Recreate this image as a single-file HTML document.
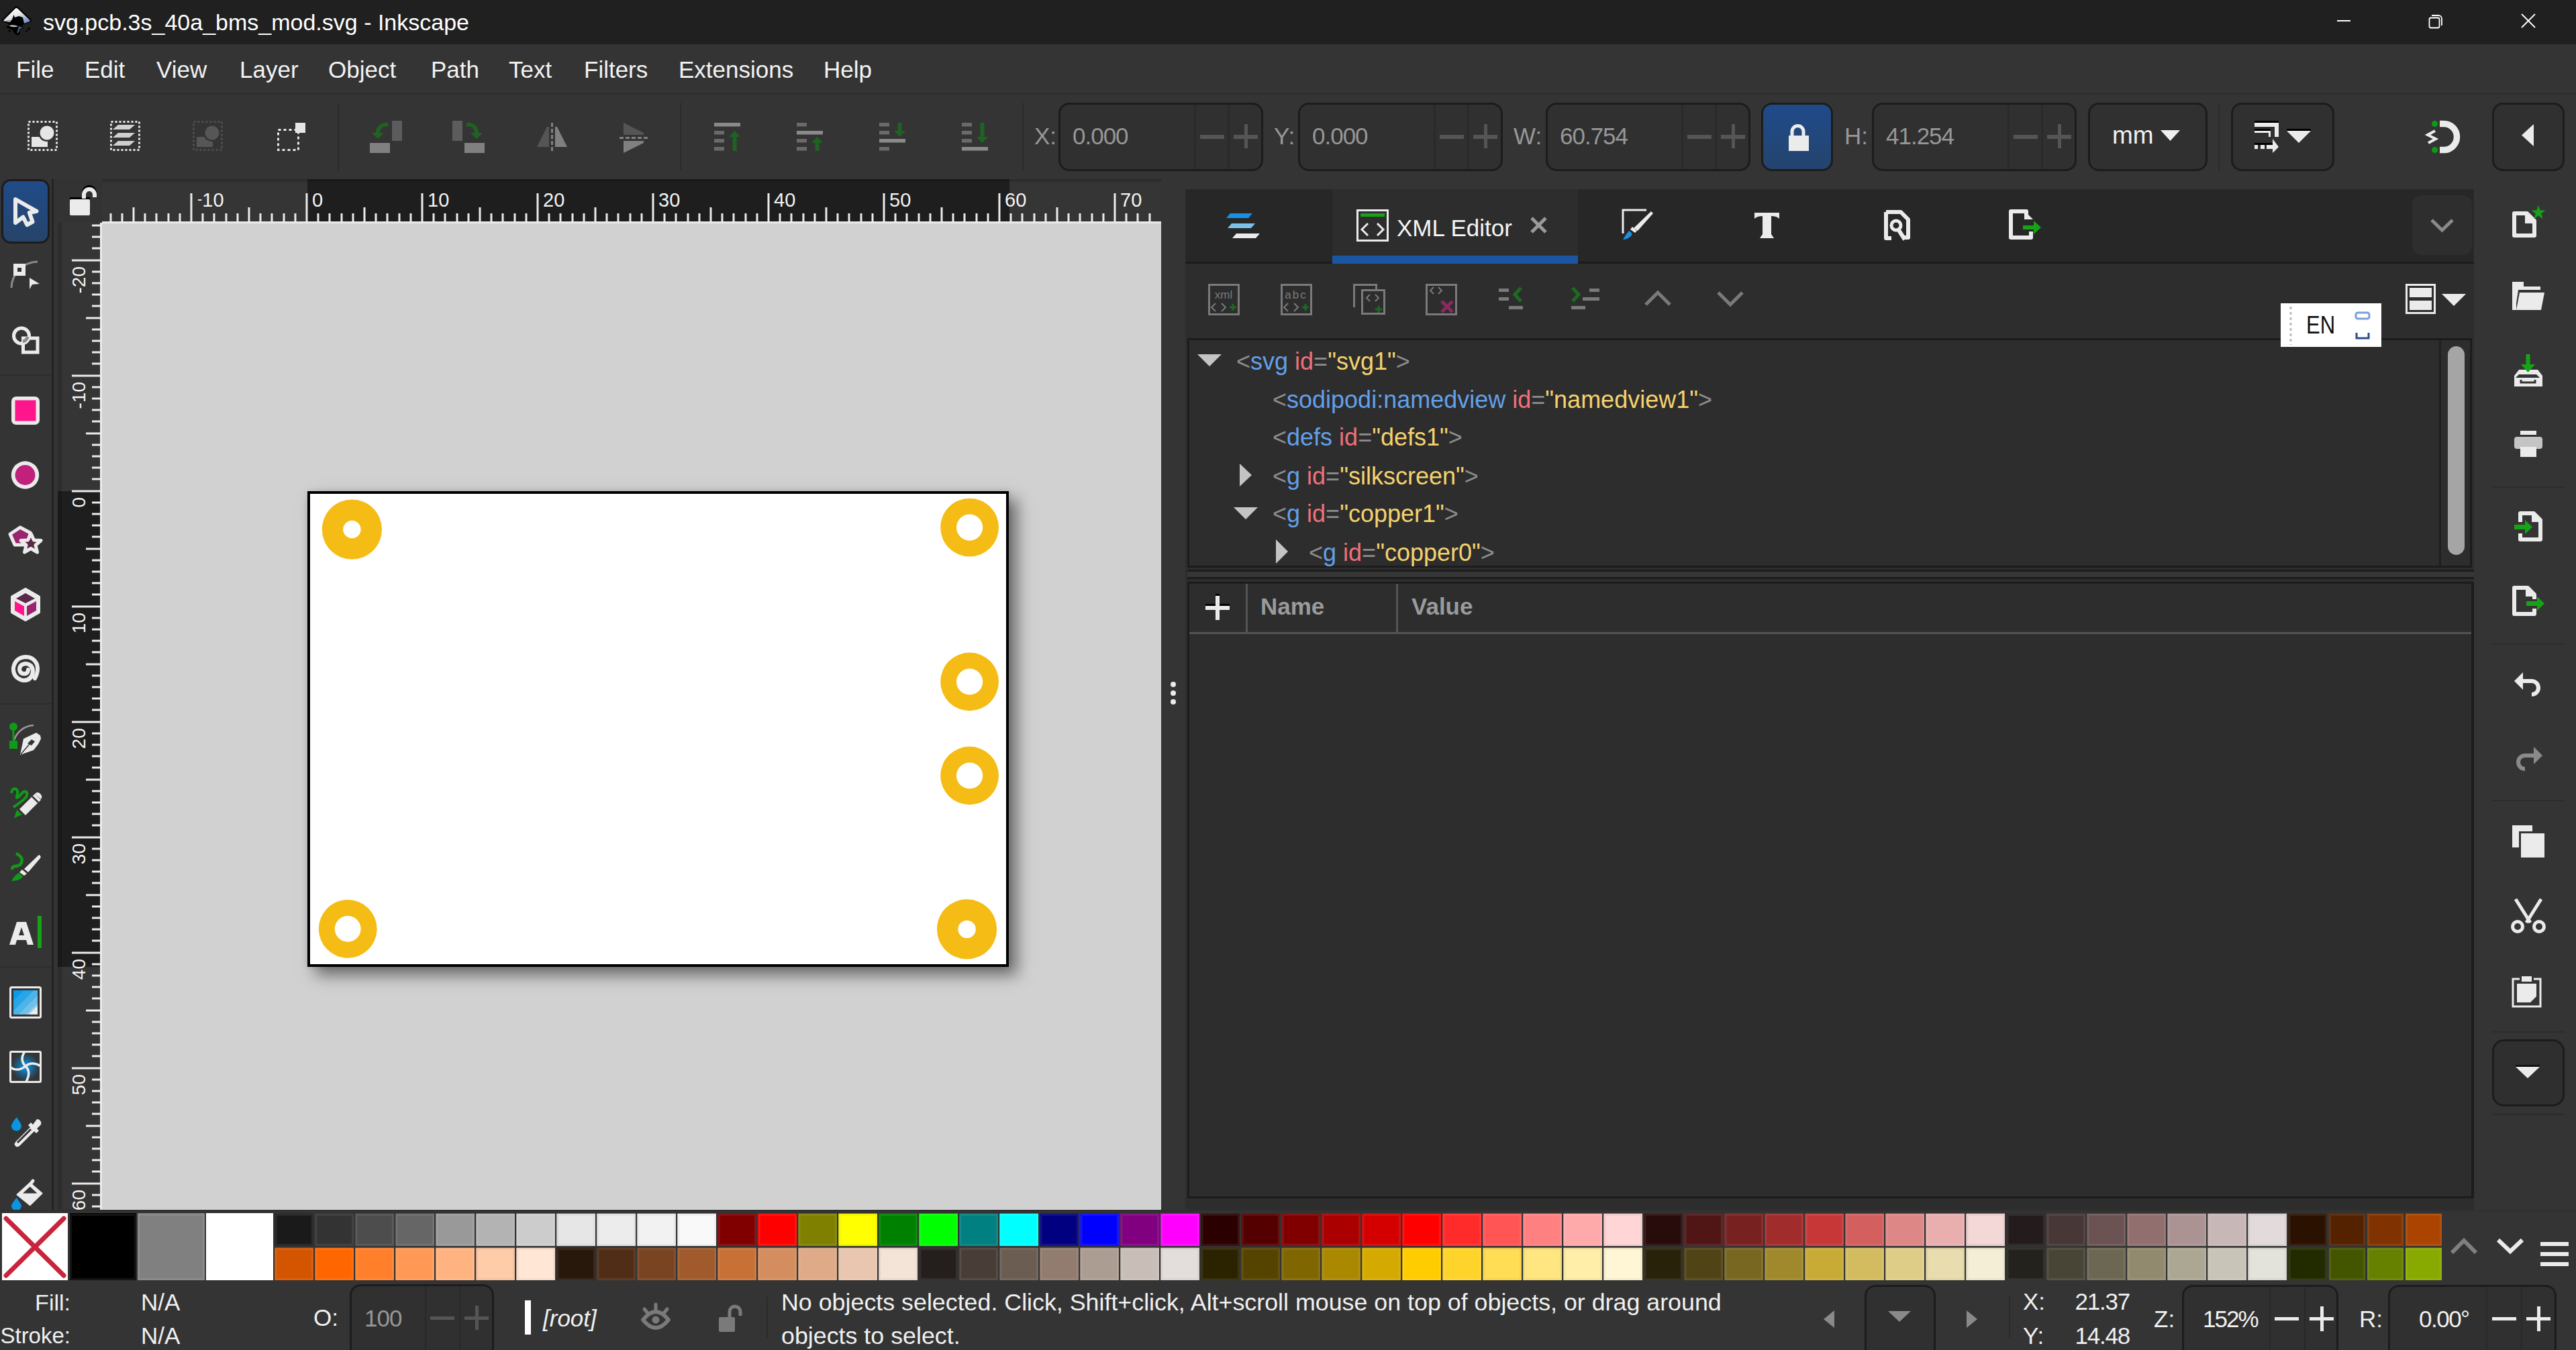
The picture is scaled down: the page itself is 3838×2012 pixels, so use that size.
<!DOCTYPE html>
<html><head><meta charset="utf-8">
<style>
*{box-sizing:border-box;margin:0;padding:0}
html,body{width:3838px;height:2012px;overflow:hidden;background:#343434;font-family:"Liberation Sans",sans-serif;color:#e8e8e8}
.a{position:absolute}
.t{position:absolute;white-space:pre;line-height:1}
svg{position:absolute;overflow:visible}
</style></head><body>
<!-- TITLE BAR -->
<div class="a" style="left:0;top:0;width:3838px;height:66px;background:#202020"></div>

<svg style="left:0;top:0" width="70" height="65" viewBox="0 0 70 65">
 <defs><linearGradient id="lg1" x1="0.3" y1="0" x2="0.9" y2="0.9"><stop offset="0" stop-color="#fff"/><stop offset="0.45" stop-color="#e8e8ec"/><stop offset="1" stop-color="#6d8fbf"/></linearGradient>
 <linearGradient id="lg2" x1="0" y1="0" x2="0" y2="1"><stop offset="0" stop-color="#ddd"/><stop offset="1" stop-color="#777"/></linearGradient></defs>
 <path d="M22 10.5 Q24.5 8.5 27 10.5 L46 28.5 Q48 31 45.5 32.5 L33 37.5 L35 42 L29 45 L30 50 L26 53 L22 50 L18 44 L9 41 L14 36 L5 32.5 Q2 31 4 28.5 Z" fill="#000"/>
 <path d="M23 12.5 Q24.5 11.5 26 12.5 L44.5 30 Q45 31.5 44 32 L36 35 L34 26 L28 24 L22 26 L20.5 22 L18 29 L14.5 33 L6 31.5 Q5 31 5.5 30 Z" fill="url(#lg1)"/>
 <path d="M6 31 L15 33 L17 30 Z" fill="#999"/>
 <path d="M13 38.5 Q19 36 27 39 Q24 41 18 40 Z" fill="#bbb"/>
 <path d="M28 39 L34 41 L29 44 L28 48 L25 50 Z" fill="#3c5a7a"/>
 <circle cx="14" cy="46" r="1.6" fill="#000"/><circle cx="39.5" cy="46.5" r="1.4" fill="#000"/><circle cx="43" cy="43" r="1.8" fill="#000"/>
</svg>
<div class="t" style="left:64px;top:16px;font-size:34px;color:#fff">svg.pcb.3s_40a_bms_mod.svg - Inkscape</div>
<div class="a" style="left:3482px;top:30px;width:20px;height:2px;background:#fff"></div>
<svg style="left:3610px;top:15px" width="40" height="35" viewBox="0 0 40 35">
 <rect x="9.5" y="11.5" width="15" height="15" rx="2.5" fill="none" stroke="#fff" stroke-width="1.8"/>
 <path d="M13 8 h10 a5 5 0 0 1 5 5 v10" fill="none" stroke="#fff" stroke-width="1.8"/>
</svg>
<svg style="left:3750px;top:15px" width="35" height="35" viewBox="0 0 35 35">
 <path d="M7 6 L27 26 M27 6 L7 26" stroke="#fff" stroke-width="1.8"/>
</svg>

<!-- MENU BAR -->
<div class="a" id="menubar" style="left:0;top:66px;width:3838px;height:75px;background:#343434;border-bottom:2px solid #2c2c2c"></div>
<!-- MENUITEMS -->
<div class="t" style="left:24px;top:86px;font-size:35px;color:#f2f2f2">File</div><div class="t" style="left:126px;top:86px;font-size:35px;color:#f2f2f2">Edit</div><div class="t" style="left:233px;top:86px;font-size:35px;color:#f2f2f2">View</div><div class="t" style="left:357px;top:86px;font-size:35px;color:#f2f2f2">Layer</div><div class="t" style="left:489px;top:86px;font-size:35px;color:#f2f2f2">Object</div><div class="t" style="left:642px;top:86px;font-size:35px;color:#f2f2f2">Path</div><div class="t" style="left:758px;top:86px;font-size:35px;color:#f2f2f2">Text</div><div class="t" style="left:870px;top:86px;font-size:35px;color:#f2f2f2">Filters</div><div class="t" style="left:1011px;top:86px;font-size:35px;color:#f2f2f2">Extensions</div><div class="t" style="left:1227px;top:86px;font-size:35px;color:#f2f2f2">Help</div>
<!-- TOOLBAR -->
<div class="a" style="left:0;top:141px;width:3838px;height:126px;background:#343434"></div>
<svg style="left:0;top:0" width="3838" height="270"><rect x="42.5" y="181.5" width="42" height="42" fill="none" stroke="#e6e6e6" stroke-width="3" stroke-dasharray="3 3"/><rect x="47" y="204" width="24" height="15" fill="#e6e6e6"/><circle cx="70" cy="198" r="13" fill="#343434"/><circle cx="70" cy="198" r="10.5" fill="#e6e6e6"/><rect x="165.5" y="181.5" width="42" height="42" fill="none" stroke="#e6e6e6" stroke-width="3" stroke-dasharray="3 3"/><path d="M176 186 H201 L193 193 H168 Z M176 198 H201 L193 205 H168 Z M176 210 H201 L193 217 H168 Z" fill="#cfcfcf"/><rect x="288.5" y="181.5" width="42" height="42" fill="none" stroke="#4e4e4e" stroke-width="3" stroke-dasharray="3 3"/><rect x="293" y="204" width="24" height="15" fill="#565656"/><circle cx="316" cy="198" r="13" fill="#343434"/><circle cx="316" cy="198" r="10.5" fill="#565656"/><rect x="414.5" y="193.5" width="30" height="30" fill="none" stroke="#e6e6e6" stroke-width="3" stroke-dasharray="4 4"/><rect x="440" y="183" width="15" height="15" fill="#e6e6e6"/><rect x="584" y="180" width="15" height="30" fill="#5c5c5c"/><rect x="551" y="213" width="30" height="15" fill="#808080"/><path d="M578 183 A15 15 0 0 0 560 198 L554 198 L563 207 L572 198 L566 198 A9 9 0 0 1 578 189 Z" fill="#1f6322"/><rect x="674" y="180" width="15" height="30" fill="#5c5c5c"/><rect x="692" y="213" width="30" height="15" fill="#808080"/><path d="M695 183 A15 15 0 0 1 713 198 L719 198 L710 207 L701 198 L707 198 A9 9 0 0 0 695 189 Z" fill="#1f6322"/><path d="M800 219 L815 189 H818 V219 Z" fill="#555"/><path d="M827 189 H830 L845 219 H827 Z" fill="#808080"/><path d="M822.5 183 V225" stroke="#808080" stroke-width="3" stroke-dasharray="6 3"/><path d="M929 183 L959 198 V201 H929 Z" fill="#555"/><path d="M929 210 H959 V213 L929 228 Z" fill="#808080"/><path d="M923 205.5 H965" stroke="#808080" stroke-width="3" stroke-dasharray="6 3"/><rect x="1064" y="183" width="39" height="5.5" fill="#8a8a8a"/><rect x="1064" y="195" width="15" height="5.5" fill="#6a6a6a"/><rect x="1064" y="207" width="15" height="5.5" fill="#6a6a6a"/><rect x="1064" y="219" width="15" height="5.5" fill="#6a6a6a"/><path d="M1094.5 195 L1103.0 204 H1097.5 V225 H1091.5 V204 H1086.0 Z" fill="#1f6322"/><rect x="1187" y="183" width="15" height="5.5" fill="#6a6a6a"/><rect x="1187" y="195" width="39" height="5.5" fill="#8a8a8a"/><rect x="1187" y="207" width="15" height="5.5" fill="#6a6a6a"/><rect x="1187" y="219" width="15" height="5.5" fill="#6a6a6a"/><path d="M1217.5 204 L1226.0 213 H1220.5 V225 H1214.5 V213 H1209.0 Z" fill="#1f6322"/><rect x="1310" y="183" width="15" height="5.5" fill="#6a6a6a"/><rect x="1310" y="195" width="15" height="5.5" fill="#6a6a6a"/><rect x="1310" y="207" width="39" height="5.5" fill="#8a8a8a"/><rect x="1310" y="219" width="15" height="5.5" fill="#6a6a6a"/><path d="M1340.5 204 L1349.0 195 H1343.5 V183 H1337.5 V195 H1332.0 Z" fill="#1f6322"/><rect x="1433" y="183" width="15" height="5.5" fill="#6a6a6a"/><rect x="1433" y="195" width="15" height="5.5" fill="#6a6a6a"/><rect x="1433" y="207" width="15" height="5.5" fill="#6a6a6a"/><rect x="1433" y="219" width="39" height="5.5" fill="#8a8a8a"/><path d="M1463.5 213 L1472.0 204 H1466.5 V183 H1460.5 V204 H1455.0 Z" fill="#1f6322"/><rect x="503" y="153" width="2" height="101" fill="#2b2b2b"/><rect x="1013" y="153" width="2" height="101" fill="#2b2b2b"/><rect x="1523" y="153" width="2" height="101" fill="#2b2b2b"/><rect x="3305" y="153" width="2" height="101" fill="#2b2b2b"/></svg>
<div class="t" style="left:1541px;top:185px;font-size:35px;color:#979797">X:</div><div class="a" style="left:1577px;top:153px;width:305px;height:102px;background:#303030;border:3px solid #1c1c1c;border-radius:16px"></div><div class="a" style="left:1779px;top:156px;width:3px;height:96px;background:#2a2a2a"></div><div class="a" style="left:1829px;top:156px;width:3px;height:96px;background:#2a2a2a"></div><div class="t" style="left:1598px;top:185px;font-size:35px;color:#979797;letter-spacing:-1px">0.000</div><div class="a" style="left:1788px;top:201px;width:36px;height:6px;background:#555555"></div><div class="a" style="left:1838px;top:201px;width:36px;height:6px;background:#555555"></div><div class="a" style="left:1853.5px;top:185px;width:5px;height:36px;background:#555555"></div><div class="t" style="left:1898px;top:185px;font-size:35px;color:#979797">Y:</div><div class="a" style="left:1934px;top:153px;width:305px;height:102px;background:#303030;border:3px solid #1c1c1c;border-radius:16px"></div><div class="a" style="left:2136px;top:156px;width:3px;height:96px;background:#2a2a2a"></div><div class="a" style="left:2186px;top:156px;width:3px;height:96px;background:#2a2a2a"></div><div class="t" style="left:1955px;top:185px;font-size:35px;color:#979797;letter-spacing:-1px">0.000</div><div class="a" style="left:2145px;top:201px;width:36px;height:6px;background:#555555"></div><div class="a" style="left:2195px;top:201px;width:36px;height:6px;background:#555555"></div><div class="a" style="left:2210.5px;top:185px;width:5px;height:36px;background:#555555"></div><div class="t" style="left:2255px;top:185px;font-size:35px;color:#979797">W:</div><div class="a" style="left:2303px;top:153px;width:305px;height:102px;background:#303030;border:3px solid #1c1c1c;border-radius:16px"></div><div class="a" style="left:2505px;top:156px;width:3px;height:96px;background:#2a2a2a"></div><div class="a" style="left:2555px;top:156px;width:3px;height:96px;background:#2a2a2a"></div><div class="t" style="left:2324px;top:185px;font-size:35px;color:#979797;letter-spacing:-1px">60.754</div><div class="a" style="left:2514px;top:201px;width:36px;height:6px;background:#555555"></div><div class="a" style="left:2564px;top:201px;width:36px;height:6px;background:#555555"></div><div class="a" style="left:2579.5px;top:185px;width:5px;height:36px;background:#555555"></div><div class="t" style="left:2748px;top:185px;font-size:35px;color:#979797">H:</div><div class="a" style="left:2789px;top:153px;width:305px;height:102px;background:#303030;border:3px solid #1c1c1c;border-radius:16px"></div><div class="a" style="left:2991px;top:156px;width:3px;height:96px;background:#2a2a2a"></div><div class="a" style="left:3041px;top:156px;width:3px;height:96px;background:#2a2a2a"></div><div class="t" style="left:2810px;top:185px;font-size:35px;color:#979797;letter-spacing:-1px">41.254</div><div class="a" style="left:3000px;top:201px;width:36px;height:6px;background:#555555"></div><div class="a" style="left:3050px;top:201px;width:36px;height:6px;background:#555555"></div><div class="a" style="left:3065.5px;top:185px;width:5px;height:36px;background:#555555"></div><div class="a" style="left:2624px;top:153px;width:107px;height:102px;background:linear-gradient(#1f4b8a,#24446e);border:3px solid #1c1c1c;border-radius:16px"></div><svg style="left:2640px;top:170px" width="80" height="70"><path d="M30 35 V26 A8.5 8.5 0 0 1 47 26 V35" fill="none" stroke="#ebebeb" stroke-width="5"/><rect x="25" y="32" width="30" height="23" fill="#ebebeb"/></svg><div class="a" style="left:3111px;top:153px;width:178px;height:102px;background:#303030;border:3px solid #1c1c1c;border-radius:16px"></div><div class="t" style="left:3147px;top:183px;font-size:37px;color:#f0f0f0">mm</div><svg style="left:3215px;top:190px" width="40" height="30"><path d="M4 4 H33 L18.5 20 Z" fill="#f0f0f0"/></svg><div class="a" style="left:3324px;top:153px;width:154px;height:102px;background:#303030;border:3px solid #1c1c1c;border-radius:16px"></div><svg style="left:3340px;top:170px" width="120" height="70"><g transform="translate(-3340,-170)">
<rect x="3359" y="180" width="36" height="3" fill="#000"/><rect x="3359" y="183" width="36" height="6" fill="#ebebeb"/><rect x="3389" y="183" width="6" height="21" fill="#ebebeb"/>
<rect x="3359" y="192" width="24" height="3" fill="#000"/><rect x="3359" y="195" width="24" height="3" fill="#ebebeb"/><rect x="3380" y="195" width="3" height="9" fill="#ebebeb"/>
<rect x="3359" y="213" width="27" height="3" fill="#000"/><rect x="3359" y="216" width="5" height="6" fill="#ebebeb"/><rect x="3368" y="216" width="6" height="6" fill="#ebebeb"/><rect x="3377" y="216" width="9" height="6" fill="#ebebeb"/><path d="M3386 207 L3395 219 L3386 228 Z" fill="#ebebeb"/>
<rect x="3407" y="192" width="36" height="3" fill="#000"/><path d="M3407 195 H3443 L3425 213 Z" fill="#ebebeb"/>
</g></svg><svg style="left:3600px;top:170px" width="80" height="70"><g transform="translate(-3600,-170)">
<path d="M3635 184.5 H3641 A19.5 19.5 0 0 1 3641 223.5 H3635" fill="none" stroke="#ebebeb" stroke-width="9.5"/>
<circle cx="3627.6" cy="184.5" r="4.5" fill="#0e9c14"/><circle cx="3627.6" cy="223.5" r="4.5" fill="#0e9c14"/>
<path d="M3628 195 L3617 201 L3629 207 L3618 213" fill="none" stroke="#ebebeb" stroke-width="4" stroke-linejoin="miter"/>
</g></svg><div class="a" style="left:3713px;top:153px;width:108px;height:102px;background:#303030;border:3px solid #1c1c1c;border-radius:16px"></div><svg style="left:3740px;top:180px" width="60" height="50"><path d="M35 5 V38 L17 21.5 Z" fill="#ebebeb"/></svg>
<!-- LEFT TOOLBOX -->
<div class="a" style="left:0;top:267px;width:78px;height:1541px;background:#343434"></div>
<div class="a" style="left:77px;top:267px;width:3px;height:1541px;background:#232323"></div>
<div class="a" style="left:2px;top:267px;width:72px;height:96px;border:3px solid #1c1c1c;border-radius:14px;background:linear-gradient(#1f4b88,#26446a)"></div>
<svg style="left:0;top:0" width="80" height="1810"><path d="M23 297 L54.5 314.8 L43.8 317 L48.5 330.5 L40.3 335 L34.5 323.5 L23 332 Z" fill="none" stroke="#ebebeb" stroke-width="6" stroke-linejoin="round"/><path d="M17 429 A40 40 0 0 1 56 390" fill="none" stroke="#8c8c8c" stroke-width="3"/><rect x="20" y="393" width="18" height="18" fill="#ebebeb"/><rect x="26" y="399" width="6" height="6" fill="#343434"/><path d="M44 414 L59 423 L48 424 L44 431 Z" fill="#ebebeb"/><circle cx="32" cy="500.5" r="11.5" fill="none" stroke="#ebebeb" stroke-width="5"/><rect x="34.5" y="504" width="21.5" height="21" fill="none" stroke="#ebebeb" stroke-width="5"/><path d="M34 509 A11.5 11.5 0 0 0 41.5 502" fill="none" stroke="#8c8c8c" stroke-width="5"/><rect x="0" y="558" width="77" height="2" fill="#2c2c2c"/><rect x="0" y="1048" width="77" height="2" fill="#2c2c2c"/><rect x="0" y="1440" width="77" height="2" fill="#2c2c2c"/><rect x="17" y="591" width="42" height="42" rx="7" fill="#ebebeb"/><rect x="22.5" y="596.5" width="31" height="31" fill="#ff168c"/><circle cx="37.5" cy="708" r="20.7" fill="#ebebeb"/><circle cx="37.5" cy="708" r="15" fill="#c0217a"/><path d="M30 786 L45 794 L42 812 L22 812 L15 796 Z" fill="#9a2470" stroke="#ebebeb" stroke-width="5" stroke-linejoin="round"/><path d="M46 795 L50.5 805 L61 805.5 L53 812.5 L55.5 823 L46 817.5 L36.5 823 L39 812.5 L31 805.5 L41.5 805 Z" fill="#5a2848" stroke="#ebebeb" stroke-width="5" stroke-linejoin="round"/><path d="M38 878 L58 889.5 V912.5 L38 924 L18 912.5 V889.5 Z" fill="#ebebeb" stroke="#ebebeb" stroke-width="4" stroke-linejoin="round"/><path d="M38 884 L52 892 L38 899 L24 892 Z" fill="#5a2848"/><path d="M22 896 L36 903.5 V918 L22 910 Z" fill="#ff168c"/><path d="M54 896 L40 903.5 V918 L54 910 Z" fill="#9a2470"/><path d="M52 1011 Q58 1000 55 990 Q50 979 38 979 Q23 980 20 995 Q19 1010 34 1014 Q47 1015 49 1001 Q49 990 38 989 Q29 990 29 998 Q30 1005 38 1004 Q42 1003 42 998" fill="none" stroke="#ebebeb" stroke-width="6" stroke-linecap="round"/><path d="M21 1103 A32 32 0 0 1 50 1081" fill="none" stroke="#9a9a9a" stroke-width="2.5"/><circle cx="20" cy="1083" r="6" fill="#0f9b18"/><rect x="18.5" y="1083" width="3" height="22" fill="#0f9b18"/><rect x="14" y="1104" width="12" height="12" fill="#0f9b18"/><path d="M30 1125 L35 1101 L54 1092 L60 1096 L61 1101 L57 1109 L50 1118 Z" fill="#ebebeb"/><path d="M41 1108 L47 1102 L52 1105 L47 1111 Z" fill="#343434"/><path d="M31 1124 L44 1109" stroke="#343434" stroke-width="1.5"/><path d="M17 1182 Q18 1174 24 1176 Q28 1179 25 1187 Q24 1192 31 1184 Q36 1177 40 1181 Q42 1186 35 1192 Q26 1199 20 1203" fill="none" stroke="#0f9b18" stroke-width="4"/><path d="M29 1206 L52 1183 L61 1192 L38 1215 Z" fill="#ebebeb"/><path d="M52 1183 Q56 1179 60 1183 Q64 1187 61 1191 Z" fill="#ebebeb"/><path d="M48 1187 L57 1196" stroke="#343434" stroke-width="2.5"/><path d="M21 1219 L25 1207 L33 1214 Z" fill="#0f9b18"/><path d="M24 1272 Q35 1277 32 1286 Q29 1291 22 1291 Q17 1292 19 1296" fill="none" stroke="#0f9b18" stroke-width="4.5"/><path d="M58 1274 Q62 1276 60 1279 L42 1300 L36 1295 Z" fill="#ebebeb"/><path d="M33 1296 L40 1302 L36 1305 L29 1300 Z" fill="#ebebeb"/><path d="M28 1301 L34 1306 Q31 1313 17 1313 Q21 1305 28 1301 Z" fill="#0f9b18"/><path d="M25 1374 H39 L50 1408 H41 L39 1401 H25 L23 1408 H14 Z M28 1394 H36 L32 1382 Z" fill="#ebebeb" fill-rule="evenodd"/><rect x="56" y="1365" width="6" height="48" fill="#16a316"/><defs><linearGradient id="gr1" x1="0" y1="0" x2="1" y2="1"><stop offset="0" stop-color="#0b9ae8"/><stop offset="0.22" stop-color="#0b9ae8"/><stop offset="0.22" stop-color="#28a5e6"/><stop offset="0.42" stop-color="#28a5e6"/><stop offset="0.42" stop-color="#4cb4e8"/><stop offset="0.6" stop-color="#4cb4e8"/><stop offset="0.6" stop-color="#6fc0ea"/><stop offset="0.76" stop-color="#6fc0ea"/><stop offset="0.76" stop-color="#93cdea"/><stop offset="0.9" stop-color="#93cdea"/><stop offset="0.9" stop-color="#b0d9eb"/><stop offset="1" stop-color="#b0d9eb"/></linearGradient><radialGradient id="rg1"><stop offset="0" stop-color="#0a9cf0"/><stop offset="0.6" stop-color="#1d5a80"/><stop offset="1" stop-color="#343434"/></radialGradient></defs><rect x="15.5" y="1471.5" width="45" height="45" rx="2" fill="#343434" stroke="#ebebeb" stroke-width="3"/><rect x="20" y="1476" width="36" height="36" fill="url(#gr1)"/><path d="M56 1499 V1512 H43 Z" fill="#ebebeb"/><rect x="15.5" y="1567.5" width="45" height="45" rx="1.5" fill="#343434" stroke="#ebebeb" stroke-width="3"/><circle cx="38" cy="1590" r="21" fill="url(#rg1)"/><path d="M36.5 1568 Q28.8 1579.5 38 1589 Q47 1581.3 60 1588.5 M38 1589 Q46.9 1597.5 39 1612 M38 1589 Q26.6 1598 15.6 1591" fill="none" stroke="#ebebeb" stroke-width="3.5"/><path d="M24.5 1665 Q32 1675 32 1678 A7.5 7.5 0 0 1 17 1678 Q17 1675 24.5 1665 Z" fill="#0b94e0"/><path d="M55 1668 A6 6 0 0 1 61 1676 L55 1682 L58 1685 L54 1689 L51 1686 L30 1707 Q26 1711 23 1708 Q20 1705 24 1701 L45 1680 L42 1677 L46 1673 L49 1676 Z" fill="#ebebeb"/><path d="M26 1703 L46 1683" stroke="#343434" stroke-width="3"/><path d="M25.5 1780.5 L44.7 1763 L62.5 1778.5 L44.7 1796 Z" fill="#ebebeb" stroke="#ebebeb" stroke-width="2" stroke-linejoin="round"/><path d="M34 1778.5 L44.7 1768.5 L55.5 1778.5 Z" fill="#343434"/><path d="M45 1765 L49 1760" stroke="#ebebeb" stroke-width="5" stroke-linecap="round"/><path d="M24.5 1785 Q32 1795 32 1797 A7.5 7.5 0 0 1 17 1797 Q17 1795 24.5 1785 Z" fill="#0b94e0"/></svg>
<!-- CORNER + RULERS -->
<div class="a" style="left:80px;top:267px;width:72px;height:65px;background:#333333"></div>
<div class="a" style="left:152px;top:267px;width:1578px;height:65px;background:#353535"></div>
<div class="a" style="left:86px;top:332px;width:66px;height:1471px;background:#353535"></div>
<svg style="left:95px;top:270px" width="60" height="60"><path d="M30 26 V20 A8 8 0 0 1 46 20 V24" fill="none" stroke="#000" stroke-width="6" transform="translate(0,-3)"/><rect x="9" y="24" width="30" height="3" fill="#000"/><path d="M30 26 V20 A8 8 0 0 1 46 20 V24" fill="none" stroke="#ebebeb" stroke-width="6"/><rect x="9" y="27" width="30" height="24" rx="2" fill="#ebebeb"/></svg>
<!-- CANVAS -->
<div class="a" style="left:152px;top:332px;width:1578px;height:1471px;background:#d1d1d1"></div>

<div class="a" style="left:458px;top:732px;width:1045px;height:709px;background:#fff;border:4.5px solid #000;box-shadow:12px 12px 22px rgba(0,0,0,0.5),0 0 8px rgba(0,0,0,0.12)"></div>
<svg style="left:0;top:0" width="1740" height="1810">
 <g fill="#f5bc15">
  <circle cx="524.4" cy="789" r="44.6"/>
  <circle cx="1444.6" cy="786.1" r="43.4"/>
  <circle cx="1444.6" cy="1016" r="43.4"/>
  <circle cx="1444.6" cy="1156" r="43.4"/>
  <circle cx="518.2" cy="1384.4" r="43.4"/>
  <circle cx="1440.6" cy="1384.9" r="44.6"/>
 </g>
 <g fill="#fff">
  <circle cx="524.4" cy="789" r="13.2"/>
  <circle cx="1444.6" cy="786.1" r="19.6"/>
  <circle cx="1444.6" cy="1016" r="19.6"/>
  <circle cx="1444.6" cy="1156" r="19.6"/>
  <circle cx="518.2" cy="1384.4" r="19.4"/>
  <circle cx="1440.6" cy="1384.9" r="13.2"/>
 </g>
</svg>
<div class="a" style="left:152px;top:267px;width:1578px;height:65px;background:#353535"></div><div class="a" style="left:458px;top:267px;width:1046px;height:63px;background:#1e1e1e"></div><div class="a" style="left:152px;top:267px;width:1578px;height:6px;background:linear-gradient(rgba(0,0,0,0.25),rgba(0,0,0,0))"></div><svg style="left:0;top:0" width="1740" height="1810"><rect x="163.5" y="318" width="3" height="12" fill="#ebebeb"/><rect x="180.5" y="318" width="3" height="12" fill="#ebebeb"/><rect x="197.5" y="309" width="3" height="21" fill="#ebebeb"/><rect x="214.5" y="318" width="3" height="12" fill="#ebebeb"/><rect x="231.5" y="318" width="3" height="12" fill="#ebebeb"/><rect x="249.5" y="318" width="3" height="12" fill="#ebebeb"/><rect x="266.5" y="318" width="3" height="12" fill="#ebebeb"/><rect x="283.5" y="288" width="3" height="42" fill="#ebebeb"/><rect x="300.5" y="318" width="3" height="12" fill="#ebebeb"/><rect x="317.5" y="318" width="3" height="12" fill="#ebebeb"/><rect x="335.5" y="318" width="3" height="12" fill="#ebebeb"/><rect x="352.5" y="318" width="3" height="12" fill="#ebebeb"/><rect x="369.5" y="309" width="3" height="21" fill="#ebebeb"/><rect x="386.5" y="318" width="3" height="12" fill="#ebebeb"/><rect x="403.5" y="318" width="3" height="12" fill="#ebebeb"/><rect x="421.5" y="318" width="3" height="12" fill="#ebebeb"/><rect x="438.5" y="318" width="3" height="12" fill="#ebebeb"/><rect x="455.5" y="288" width="3" height="42" fill="#ebebeb"/><rect x="472.5" y="318" width="3" height="12" fill="#ebebeb"/><rect x="489.5" y="318" width="3" height="12" fill="#ebebeb"/><rect x="507.5" y="318" width="3" height="12" fill="#ebebeb"/><rect x="524.5" y="318" width="3" height="12" fill="#ebebeb"/><rect x="541.5" y="309" width="3" height="21" fill="#ebebeb"/><rect x="558.5" y="318" width="3" height="12" fill="#ebebeb"/><rect x="575.5" y="318" width="3" height="12" fill="#ebebeb"/><rect x="593.5" y="318" width="3" height="12" fill="#ebebeb"/><rect x="610.5" y="318" width="3" height="12" fill="#ebebeb"/><rect x="627.5" y="288" width="3" height="42" fill="#ebebeb"/><rect x="644.5" y="318" width="3" height="12" fill="#ebebeb"/><rect x="661.5" y="318" width="3" height="12" fill="#ebebeb"/><rect x="679.5" y="318" width="3" height="12" fill="#ebebeb"/><rect x="696.5" y="318" width="3" height="12" fill="#ebebeb"/><rect x="713.5" y="309" width="3" height="21" fill="#ebebeb"/><rect x="730.5" y="318" width="3" height="12" fill="#ebebeb"/><rect x="747.5" y="318" width="3" height="12" fill="#ebebeb"/><rect x="765.5" y="318" width="3" height="12" fill="#ebebeb"/><rect x="782.5" y="318" width="3" height="12" fill="#ebebeb"/><rect x="799.5" y="288" width="3" height="42" fill="#ebebeb"/><rect x="816.5" y="318" width="3" height="12" fill="#ebebeb"/><rect x="833.5" y="318" width="3" height="12" fill="#ebebeb"/><rect x="851.5" y="318" width="3" height="12" fill="#ebebeb"/><rect x="868.5" y="318" width="3" height="12" fill="#ebebeb"/><rect x="885.5" y="309" width="3" height="21" fill="#ebebeb"/><rect x="902.5" y="318" width="3" height="12" fill="#ebebeb"/><rect x="919.5" y="318" width="3" height="12" fill="#ebebeb"/><rect x="937.5" y="318" width="3" height="12" fill="#ebebeb"/><rect x="954.5" y="318" width="3" height="12" fill="#ebebeb"/><rect x="971.5" y="288" width="3" height="42" fill="#ebebeb"/><rect x="988.5" y="318" width="3" height="12" fill="#ebebeb"/><rect x="1005.5" y="318" width="3" height="12" fill="#ebebeb"/><rect x="1023.5" y="318" width="3" height="12" fill="#ebebeb"/><rect x="1040.5" y="318" width="3" height="12" fill="#ebebeb"/><rect x="1057.5" y="309" width="3" height="21" fill="#ebebeb"/><rect x="1074.5" y="318" width="3" height="12" fill="#ebebeb"/><rect x="1091.5" y="318" width="3" height="12" fill="#ebebeb"/><rect x="1109.5" y="318" width="3" height="12" fill="#ebebeb"/><rect x="1126.5" y="318" width="3" height="12" fill="#ebebeb"/><rect x="1143.5" y="288" width="3" height="42" fill="#ebebeb"/><rect x="1160.5" y="318" width="3" height="12" fill="#ebebeb"/><rect x="1177.5" y="318" width="3" height="12" fill="#ebebeb"/><rect x="1195.5" y="318" width="3" height="12" fill="#ebebeb"/><rect x="1212.5" y="318" width="3" height="12" fill="#ebebeb"/><rect x="1229.5" y="309" width="3" height="21" fill="#ebebeb"/><rect x="1246.5" y="318" width="3" height="12" fill="#ebebeb"/><rect x="1263.5" y="318" width="3" height="12" fill="#ebebeb"/><rect x="1281.5" y="318" width="3" height="12" fill="#ebebeb"/><rect x="1298.5" y="318" width="3" height="12" fill="#ebebeb"/><rect x="1315.5" y="288" width="3" height="42" fill="#ebebeb"/><rect x="1332.5" y="318" width="3" height="12" fill="#ebebeb"/><rect x="1349.5" y="318" width="3" height="12" fill="#ebebeb"/><rect x="1367.5" y="318" width="3" height="12" fill="#ebebeb"/><rect x="1384.5" y="318" width="3" height="12" fill="#ebebeb"/><rect x="1401.5" y="309" width="3" height="21" fill="#ebebeb"/><rect x="1418.5" y="318" width="3" height="12" fill="#ebebeb"/><rect x="1435.5" y="318" width="3" height="12" fill="#ebebeb"/><rect x="1453.5" y="318" width="3" height="12" fill="#ebebeb"/><rect x="1470.5" y="318" width="3" height="12" fill="#ebebeb"/><rect x="1487.5" y="288" width="3" height="42" fill="#ebebeb"/><rect x="1504.5" y="318" width="3" height="12" fill="#ebebeb"/><rect x="1521.5" y="318" width="3" height="12" fill="#ebebeb"/><rect x="1539.5" y="318" width="3" height="12" fill="#ebebeb"/><rect x="1556.5" y="318" width="3" height="12" fill="#ebebeb"/><rect x="1573.5" y="309" width="3" height="21" fill="#ebebeb"/><rect x="1590.5" y="318" width="3" height="12" fill="#ebebeb"/><rect x="1607.5" y="318" width="3" height="12" fill="#ebebeb"/><rect x="1625.5" y="318" width="3" height="12" fill="#ebebeb"/><rect x="1642.5" y="318" width="3" height="12" fill="#ebebeb"/><rect x="1659.5" y="288" width="3" height="42" fill="#ebebeb"/><rect x="1676.5" y="318" width="3" height="12" fill="#ebebeb"/><rect x="1693.5" y="318" width="3" height="12" fill="#ebebeb"/><rect x="1711.5" y="318" width="3" height="12" fill="#ebebeb"/><rect x="152" y="330" width="1578" height="3" fill="#ebebeb"/><rect x="86" y="332" width="64" height="1471" fill="#353535"/><rect x="86" y="732" width="64" height="709" fill="#1e1e1e"/><rect x="137" y="334.5" width="12" height="3" fill="#ebebeb"/><rect x="137" y="351.5" width="12" height="3" fill="#ebebeb"/><rect x="137" y="368.5" width="12" height="3" fill="#ebebeb"/><rect x="107" y="386.5" width="42" height="3" fill="#ebebeb"/><rect x="137" y="403.5" width="12" height="3" fill="#ebebeb"/><rect x="137" y="420.5" width="12" height="3" fill="#ebebeb"/><rect x="137" y="437.5" width="12" height="3" fill="#ebebeb"/><rect x="137" y="454.5" width="12" height="3" fill="#ebebeb"/><rect x="128" y="472.5" width="21" height="3" fill="#ebebeb"/><rect x="137" y="489.5" width="12" height="3" fill="#ebebeb"/><rect x="137" y="506.5" width="12" height="3" fill="#ebebeb"/><rect x="137" y="523.5" width="12" height="3" fill="#ebebeb"/><rect x="137" y="540.5" width="12" height="3" fill="#ebebeb"/><rect x="107" y="558.5" width="42" height="3" fill="#ebebeb"/><rect x="137" y="575.5" width="12" height="3" fill="#ebebeb"/><rect x="137" y="592.5" width="12" height="3" fill="#ebebeb"/><rect x="137" y="609.5" width="12" height="3" fill="#ebebeb"/><rect x="137" y="626.5" width="12" height="3" fill="#ebebeb"/><rect x="128" y="644.5" width="21" height="3" fill="#ebebeb"/><rect x="137" y="661.5" width="12" height="3" fill="#ebebeb"/><rect x="137" y="678.5" width="12" height="3" fill="#ebebeb"/><rect x="137" y="695.5" width="12" height="3" fill="#ebebeb"/><rect x="137" y="712.5" width="12" height="3" fill="#ebebeb"/><rect x="107" y="730.5" width="42" height="3" fill="#ebebeb"/><rect x="137" y="747.5" width="12" height="3" fill="#ebebeb"/><rect x="137" y="764.5" width="12" height="3" fill="#ebebeb"/><rect x="137" y="781.5" width="12" height="3" fill="#ebebeb"/><rect x="137" y="798.5" width="12" height="3" fill="#ebebeb"/><rect x="128" y="816.5" width="21" height="3" fill="#ebebeb"/><rect x="137" y="833.5" width="12" height="3" fill="#ebebeb"/><rect x="137" y="850.5" width="12" height="3" fill="#ebebeb"/><rect x="137" y="867.5" width="12" height="3" fill="#ebebeb"/><rect x="137" y="884.5" width="12" height="3" fill="#ebebeb"/><rect x="107" y="902.5" width="42" height="3" fill="#ebebeb"/><rect x="137" y="919.5" width="12" height="3" fill="#ebebeb"/><rect x="137" y="936.5" width="12" height="3" fill="#ebebeb"/><rect x="137" y="953.5" width="12" height="3" fill="#ebebeb"/><rect x="137" y="970.5" width="12" height="3" fill="#ebebeb"/><rect x="128" y="988.5" width="21" height="3" fill="#ebebeb"/><rect x="137" y="1005.5" width="12" height="3" fill="#ebebeb"/><rect x="137" y="1022.5" width="12" height="3" fill="#ebebeb"/><rect x="137" y="1039.5" width="12" height="3" fill="#ebebeb"/><rect x="137" y="1056.5" width="12" height="3" fill="#ebebeb"/><rect x="107" y="1074.5" width="42" height="3" fill="#ebebeb"/><rect x="137" y="1091.5" width="12" height="3" fill="#ebebeb"/><rect x="137" y="1108.5" width="12" height="3" fill="#ebebeb"/><rect x="137" y="1125.5" width="12" height="3" fill="#ebebeb"/><rect x="137" y="1142.5" width="12" height="3" fill="#ebebeb"/><rect x="128" y="1160.5" width="21" height="3" fill="#ebebeb"/><rect x="137" y="1177.5" width="12" height="3" fill="#ebebeb"/><rect x="137" y="1194.5" width="12" height="3" fill="#ebebeb"/><rect x="137" y="1211.5" width="12" height="3" fill="#ebebeb"/><rect x="137" y="1228.5" width="12" height="3" fill="#ebebeb"/><rect x="107" y="1246.5" width="42" height="3" fill="#ebebeb"/><rect x="137" y="1263.5" width="12" height="3" fill="#ebebeb"/><rect x="137" y="1280.5" width="12" height="3" fill="#ebebeb"/><rect x="137" y="1297.5" width="12" height="3" fill="#ebebeb"/><rect x="137" y="1314.5" width="12" height="3" fill="#ebebeb"/><rect x="128" y="1332.5" width="21" height="3" fill="#ebebeb"/><rect x="137" y="1349.5" width="12" height="3" fill="#ebebeb"/><rect x="137" y="1366.5" width="12" height="3" fill="#ebebeb"/><rect x="137" y="1383.5" width="12" height="3" fill="#ebebeb"/><rect x="137" y="1400.5" width="12" height="3" fill="#ebebeb"/><rect x="107" y="1418.5" width="42" height="3" fill="#ebebeb"/><rect x="137" y="1435.5" width="12" height="3" fill="#ebebeb"/><rect x="137" y="1452.5" width="12" height="3" fill="#ebebeb"/><rect x="137" y="1469.5" width="12" height="3" fill="#ebebeb"/><rect x="137" y="1486.5" width="12" height="3" fill="#ebebeb"/><rect x="128" y="1504.5" width="21" height="3" fill="#ebebeb"/><rect x="137" y="1521.5" width="12" height="3" fill="#ebebeb"/><rect x="137" y="1538.5" width="12" height="3" fill="#ebebeb"/><rect x="137" y="1555.5" width="12" height="3" fill="#ebebeb"/><rect x="137" y="1572.5" width="12" height="3" fill="#ebebeb"/><rect x="107" y="1590.5" width="42" height="3" fill="#ebebeb"/><rect x="137" y="1607.5" width="12" height="3" fill="#ebebeb"/><rect x="137" y="1624.5" width="12" height="3" fill="#ebebeb"/><rect x="137" y="1641.5" width="12" height="3" fill="#ebebeb"/><rect x="137" y="1658.5" width="12" height="3" fill="#ebebeb"/><rect x="128" y="1676.5" width="21" height="3" fill="#ebebeb"/><rect x="137" y="1693.5" width="12" height="3" fill="#ebebeb"/><rect x="137" y="1710.5" width="12" height="3" fill="#ebebeb"/><rect x="137" y="1727.5" width="12" height="3" fill="#ebebeb"/><rect x="137" y="1744.5" width="12" height="3" fill="#ebebeb"/><rect x="107" y="1762.5" width="42" height="3" fill="#ebebeb"/><rect x="137" y="1779.5" width="12" height="3" fill="#ebebeb"/><rect x="137" y="1796.5" width="12" height="3" fill="#ebebeb"/><rect x="149" y="332" width="3" height="1471" fill="#ebebeb"/><rect x="86" y="332" width="6" height="1471" fill="rgba(0,0,0,0.15)"/></svg><div class="t" style="left:294px;top:284px;font-size:29px;color:#f4f4f4"><span style="font-size:22px;position:relative;top:-4px">-</span>10</div><div class="t" style="left:465px;top:284px;font-size:29px;color:#f4f4f4">0</div><div class="t" style="left:637px;top:284px;font-size:29px;color:#f4f4f4">10</div><div class="t" style="left:809px;top:284px;font-size:29px;color:#f4f4f4">20</div><div class="t" style="left:981px;top:284px;font-size:29px;color:#f4f4f4">30</div><div class="t" style="left:1153px;top:284px;font-size:29px;color:#f4f4f4">40</div><div class="t" style="left:1325px;top:284px;font-size:29px;color:#f4f4f4">50</div><div class="t" style="left:1497px;top:284px;font-size:29px;color:#f4f4f4">60</div><div class="t" style="left:1669px;top:284px;font-size:29px;color:#f4f4f4">70</div><div class="t" style="left:104px;top:397px;font-size:28px;color:#f4f4f4;transform-origin:0 0;transform:rotate(-90deg) translate(-100%,0);width:auto"><span style="display:inline-block">-20</span></div><div class="t" style="left:104px;top:569px;font-size:28px;color:#f4f4f4;transform-origin:0 0;transform:rotate(-90deg) translate(-100%,0);width:auto"><span style="display:inline-block">-10</span></div><div class="t" style="left:104px;top:741px;font-size:28px;color:#f4f4f4;transform-origin:0 0;transform:rotate(-90deg) translate(-100%,0);width:auto"><span style="display:inline-block">0</span></div><div class="t" style="left:104px;top:913px;font-size:28px;color:#f4f4f4;transform-origin:0 0;transform:rotate(-90deg) translate(-100%,0);width:auto"><span style="display:inline-block">10</span></div><div class="t" style="left:104px;top:1085px;font-size:28px;color:#f4f4f4;transform-origin:0 0;transform:rotate(-90deg) translate(-100%,0);width:auto"><span style="display:inline-block">20</span></div><div class="t" style="left:104px;top:1257px;font-size:28px;color:#f4f4f4;transform-origin:0 0;transform:rotate(-90deg) translate(-100%,0);width:auto"><span style="display:inline-block">30</span></div><div class="t" style="left:104px;top:1429px;font-size:28px;color:#f4f4f4;transform-origin:0 0;transform:rotate(-90deg) translate(-100%,0);width:auto"><span style="display:inline-block">40</span></div><div class="t" style="left:104px;top:1601px;font-size:28px;color:#f4f4f4;transform-origin:0 0;transform:rotate(-90deg) translate(-100%,0);width:auto"><span style="display:inline-block">50</span></div><div class="t" style="left:104px;top:1773px;font-size:28px;color:#f4f4f4;transform-origin:0 0;transform:rotate(-90deg) translate(-100%,0);width:auto"><span style="display:inline-block">60</span></div>
<!-- DOCK -->
<div class="a" style="left:1766px;top:282px;width:1920px;height:1526px;background:#2d2d2d"></div>
<div class="a" style="left:1730px;top:267px;width:36px;height:1541px;background:#343434"></div>
<div class="a" style="left:1766px;top:282px;width:1920px;height:1526px;background:#2d2d2d"></div>
<div class="a" style="left:1766px;top:282px;width:1920px;height:108px;background:#272727"></div>
<div class="a" style="left:1766px;top:390px;width:1920px;height:3px;background:#1c1c1c"></div>
<div class="a" style="left:1985px;top:282px;width:366px;height:111px;background:#2d2d2d"></div>
<div class="a" style="left:1985px;top:381px;width:366px;height:12px;background:#1b56a3"></div>
<svg style="left:1740px;top:1015px" width="20" height="40"><circle cx="8" cy="5" r="4" fill="#ebebeb"/><circle cx="8" cy="18" r="4" fill="#ebebeb"/><circle cx="8" cy="31" r="4" fill="#ebebeb"/></svg>
<svg style="left:0;top:0" width="3838" height="520"><path d="M1833 318 H1866 L1860 325 H1827 Z" fill="#1a8fe6"/><path d="M1835 333 H1870 L1864 340 H1829 Z" fill="#7cc0ec"/><path d="M1842 348 H1877 L1871 355 H1836 Z" fill="#ebebeb"/><rect x="2022.5" y="313.5" width="45" height="45" fill="none" stroke="#ebebeb" stroke-width="3"/><rect x="2027" y="318" width="36" height="5" fill="#16a316"/><path d="M2038 333 L2029 342 L2038 351 M2052 333 L2061 342 L2052 351" fill="none" stroke="#ebebeb" stroke-width="3"/><path d="M2282 325 L2303 346 M2303 325 L2282 346" stroke="#9a9a9a" stroke-width="5"/><path d="M2418 348 V313 H2453" fill="none" stroke="#ebebeb" stroke-width="3"/><path d="M2463 318 L2440 344 L2434 340 L2460 315 Z" fill="#ebebeb"/><path d="M2432 338 L2439 344 L2436 347 L2429 342 Z" fill="#ebebeb"/><path d="M2427 344 Q2434 348 2430 352 Q2424 357 2418 357 Q2422 350 2427 344 Z" fill="#1a8fe6"/><path d="M2614 317 H2651 V326 Q2647 322 2639 322 V349 L2643 355 H2622 L2626 349 V322 Q2618 322 2614 326 Z" fill="#ebebeb"/><path d="M2810 316 H2832 L2843 327 V354 H2835" fill="none" stroke="#ebebeb" stroke-width="6" stroke-linejoin="round"/><path d="M2810 316 V355 H2818" fill="none" stroke="#ebebeb" stroke-width="6" stroke-linejoin="round"/><circle cx="2825" cy="336" r="7" fill="none" stroke="#ebebeb" stroke-width="5"/><path d="M2827 340 L2838 357" stroke="#ebebeb" stroke-width="6"/><path d="M3019 325 V315 H2996 V354 H3026 V345" fill="none" stroke="#ebebeb" stroke-width="6" stroke-linejoin="round"/><path d="M3016 314 L3029 327 H3016 Z" fill="#ebebeb"/><path d="M3014 336 H3030 V329 L3041 339 L3030 349 V342 H3014 Z" fill="#16a316"/><rect x="3594" y="291" width="89" height="89" rx="14" fill="#2e2e2e"/><path d="M3623 328 L3638.5 343 L3654 328" fill="none" stroke="#8a8a8a" stroke-width="5"/></svg>
<div class="t" style="left:2081px;top:322px;font-size:35px;color:#f4f4f4">XML Editor</div>
<svg style="left:0;top:-2px" width="3838" height="520"><rect x="1801.5" y="426.5" width="44" height="44" fill="none" stroke="#7a7a7a" stroke-width="3"/><text x="1823" y="447" font-family="Liberation Sans" font-size="17" fill="#7a7a7a" text-anchor="middle">xml</text><path d="M1811 454 L1805 460 L1811 466 M1820 454 L1826 460 L1820 466" fill="none" stroke="#7a7a7a" stroke-width="2"/><path d="M1832 460 h10 M1837 455 v10" stroke="#1e6a22" stroke-width="3"/><rect x="1909.5" y="426.5" width="44" height="44" fill="none" stroke="#7a7a7a" stroke-width="3"/><text x="1931" y="447" font-family="Liberation Sans" font-size="17" fill="#7a7a7a" text-anchor="middle" letter-spacing="2">abc</text><path d="M1919 454 L1913 460 L1919 466 M1928 454 L1934 460 L1928 466" fill="none" stroke="#7a7a7a" stroke-width="2"/><path d="M1940 460 h10 M1945 455 v10" stroke="#1e6a22" stroke-width="3"/><path d="M2017.5 460 V426.5 H2050.5 V433" fill="none" stroke="#7a7a7a" stroke-width="3"/><rect x="2029.5" y="434.5" width="33" height="35" fill="none" stroke="#7a7a7a" stroke-width="3"/><path d="M2041 441 L2036 446 L2041 451 M2049 441 L2054 446 L2049 451" fill="none" stroke="#7a7a7a" stroke-width="2"/><path d="M2049 463 h10 M2054 458 v10" stroke="#1e6a22" stroke-width="3"/><rect x="2125.5" y="426.5" width="44" height="44" fill="none" stroke="#7a7a7a" stroke-width="3"/><path d="M2136 430 L2131 435 L2136 440 M2143 430 L2148 435 L2143 440" fill="none" stroke="#7a7a7a" stroke-width="2"/><path d="M2148 451 L2164 467 M2164 451 L2148 467" stroke="#8a2a5e" stroke-width="5"/><rect x="2233" y="432" width="15" height="5" fill="#7a7a7a"/><rect x="2233" y="445" width="15" height="5" fill="#7a7a7a"/><rect x="2248" y="458" width="21" height="5" fill="#7a7a7a"/><path d="M2266 431 L2257 441 L2266 451" fill="none" stroke="#1e6a22" stroke-width="5"/><rect x="2368" y="432" width="15" height="5" fill="#7a7a7a"/><rect x="2358" y="445" width="25" height="5" fill="#7a7a7a"/><rect x="2341" y="458" width="21" height="5" fill="#7a7a7a"/><path d="M2343 431 L2352 441 L2343 451" fill="none" stroke="#1e6a22" stroke-width="5"/><path d="M2452 456 L2470 438 L2488 456" fill="none" stroke="#7a7a7a" stroke-width="5"/><path d="M2560 438 L2578 456 L2596 438" fill="none" stroke="#7a7a7a" stroke-width="5"/><rect x="3585.5" y="426.5" width="42" height="42" fill="none" stroke="#ebebeb" stroke-width="3"/><rect x="3590" y="431" width="33" height="14" fill="#ebebeb"/><rect x="3590" y="450" width="33" height="14" fill="#ebebeb"/><path d="M3638 440 H3674 L3656 458 Z" fill="#ebebeb"/></svg>
<div class="a" style="left:1769px;top:504px;width:1914px;height:342px;border:3px solid #1c1c1c;background:#2d2d2d"></div>
<div class="a" style="left:3634px;top:505px;width:3px;height:338px;background:#1f1f1f"></div>
<div class="a" style="left:3647px;top:516px;width:25px;height:311px;background:#a5a5a5;border-radius:12.5px"></div>
<div class="a" style="left:1769px;top:849px;width:1917px;height:3px;background:#1c1c1c"></div>
<div class="a" style="left:1769px;top:852px;width:1917px;height:8px;background:#363636"></div>
<div class="a" style="left:1769px;top:860px;width:1917px;height:3px;background:#1c1c1c"></div>
<div class="a" style="left:1769px;top:867px;width:1917px;height:919px;border:3px solid #1c1c1c;border-right:none;background:#2d2d2d"></div>
<div class="a" style="left:3682px;top:867px;width:4px;height:919px;background:#1c1c1c"></div>
<div class="a" style="left:1772px;top:942px;width:1910px;height:3px;background:#545454"></div>
<div class="a" style="left:1856px;top:870px;width:3px;height:72px;background:#545454"></div>
<div class="a" style="left:2080px;top:870px;width:3px;height:72px;background:#545454"></div>
<svg style="left:1790px;top:880px" width="50" height="50"><rect x="6" y="20" width="36" height="6" fill="#000"/><rect x="21" y="5" width="6" height="6" fill="#000"/><rect x="6" y="23" width="36" height="6" fill="#ebebeb"/><rect x="21" y="8" width="6" height="36" fill="#ebebeb"/></svg>
<div class="t" style="left:1878px;top:886px;font-size:35px;font-weight:bold;color:#9a9a9a">Name</div>
<div class="t" style="left:2103px;top:886px;font-size:35px;font-weight:bold;color:#9a9a9a">Value</div>
<div class="t" style="left:1842px;top:521px;font-size:36px;color:#8c8c8c">&lt;<span style="color:#62a0ea">svg</span> <span style="color:#f0707a">id</span>=<span style="color:#f5d26e">"svg1"</span>&gt;</div>
<div class="t" style="left:1896px;top:578px;font-size:36px;color:#8c8c8c">&lt;<span style="color:#62a0ea">sodipodi:namedview</span> <span style="color:#f0707a">id</span>=<span style="color:#f5d26e">"namedview1"</span>&gt;</div>
<div class="t" style="left:1896px;top:634px;font-size:36px;color:#8c8c8c">&lt;<span style="color:#62a0ea">defs</span> <span style="color:#f0707a">id</span>=<span style="color:#f5d26e">"defs1"</span>&gt;</div>
<div class="t" style="left:1896px;top:692px;font-size:36px;color:#8c8c8c">&lt;<span style="color:#62a0ea">g</span> <span style="color:#f0707a">id</span>=<span style="color:#f5d26e">"silkscreen"</span>&gt;</div>
<div class="t" style="left:1896px;top:748px;font-size:36px;color:#8c8c8c">&lt;<span style="color:#62a0ea">g</span> <span style="color:#f0707a">id</span>=<span style="color:#f5d26e">"copper1"</span>&gt;</div>
<div class="t" style="left:1950px;top:806px;font-size:36px;color:#8c8c8c">&lt;<span style="color:#62a0ea">g</span> <span style="color:#f0707a">id</span>=<span style="color:#f5d26e">"copper0"</span>&gt;</div>
<svg style="left:0;top:0" width="2000" height="900"><path d="M1784 528 H1820 L1802 546 Z" fill="#c4c4c4"/><path d="M1847 691 L1865 708 L1847 725 Z" fill="#c4c4c4"/><path d="M1838 756 H1874 L1856 774 Z" fill="#c4c4c4"/><path d="M1901 804 L1919 822 L1901 840 Z" fill="#c4c4c4"/></svg>
<div class="a" style="left:3398px;top:452px;width:150px;height:65px;background:#fff"></div>
<div class="t" style="left:3436px;top:466px;font-size:37px;color:#111;transform:scaleX(0.84);transform-origin:0 0">EN</div>
<svg style="left:3400px;top:452px" width="150" height="65"><path d="M13 5 V62" stroke="#bbb" stroke-width="3" stroke-dasharray="4 4"/><rect x="110" y="14" width="20" height="9" rx="3" fill="none" stroke="#7aa0d8" stroke-width="3"/><path d="M111 44 V52 H129 V44" fill="none" stroke="#2a4d8f" stroke-width="3"/></svg>
<!-- RIGHT COMMAND BAR -->
<div class="a" style="left:3686px;top:267px;width:152px;height:1541px;background:#343434"></div>
<svg style="left:0;top:0" width="3838" height="2012"><path d="M3746 318 H3765 L3776 329 V351 H3746 Z" fill="none" stroke="#ebebeb" stroke-width="6" stroke-linejoin="round"/><path d="M3762 316 L3779 333 H3762 Z" fill="#ebebeb"/><path d="M3782 306 L3784.6 313.4 L3792.5 313.5 L3786.2 318.3 L3788.5 325.9 L3782 321.4 L3775.5 325.9 L3777.8 318.3 L3771.5 313.5 L3779.4 313.4 Z" fill="#16a316"/><path d="M3743 420 H3760 V427 H3785 V432 H3752 L3749 452 V462 H3743 Z" fill="#ebebeb"/><path d="M3754 436 H3791 L3786 462 H3749 Z" fill="#ebebeb"/><path d="M3753 551 H3781 L3788 560 V576 H3746 V560 Z" fill="#ebebeb"/><path d="M3753 558 L3748 563 H3784 L3779 558 Z" fill="#343434"/><path d="M3756 566 V570 H3777 V566" fill="none" stroke="#343434" stroke-width="3"/><path d="M3763.5 528 H3769.5 V543 H3777 L3766.5 555 L3756 543 H3763.5 Z" fill="#16a316"/><rect x="3755" y="642" width="24" height="6" fill="#ebebeb"/><rect x="3746" y="651" width="42" height="18" rx="4" fill="#c4c4c4"/><rect x="3755" y="666" width="24" height="15" fill="#ebebeb"/><rect x="3713" y="725" width="108" height="2" fill="#2c2c2c"/><rect x="3713" y="959" width="108" height="2" fill="#2c2c2c"/><rect x="3713" y="1192" width="108" height="2" fill="#2c2c2c"/><rect x="3713" y="1537" width="108" height="2" fill="#2c2c2c"/><rect x="3713" y="1660" width="108" height="2" fill="#2c2c2c"/><path d="M3755 778 V765 H3775 L3785 775 V804 H3755 V795" fill="none" stroke="#ebebeb" stroke-width="6" stroke-linejoin="round"/><path d="M3772 762 L3788 778 H3772 Z" fill="#ebebeb"/><path d="M3746 782 H3762 V775 L3773 785.5 L3762 796 V789 H3746 Z" fill="#16a316"/><path d="M3776 893 V886 L3766 876 H3746 V915 H3776 V907" fill="none" stroke="#ebebeb" stroke-width="6" stroke-linejoin="round"/><path d="M3763 873 L3779 889 H3763 Z" fill="#ebebeb"/><path d="M3764 896 H3780 V889 L3791 899.5 L3780 910 V903 H3764 Z" fill="#16a316"/><path d="M3758 1015 H3772 A10 10 0 0 1 3772 1035" fill="none" stroke="#ebebeb" stroke-width="6"/><path d="M3746 1015 L3759 1002 V1028 Z" fill="#ebebeb"/><path d="M3776 1126 H3762 A10 10 0 0 0 3762 1146" fill="none" stroke="#8a8a8a" stroke-width="6"/><path d="M3788 1126 L3775 1113 V1139 Z" fill="#8a8a8a"/><rect x="3743" y="1230" width="30" height="33" fill="#ebebeb"/><rect x="3753" y="1239" width="41" height="42" fill="#343434"/><rect x="3756" y="1242" width="35" height="36" fill="#ebebeb"/><path d="M3748 1340 L3770 1375 M3786 1340 L3764 1375" stroke="#ebebeb" stroke-width="5"/><circle cx="3751" cy="1381" r="7.5" fill="none" stroke="#ebebeb" stroke-width="5"/><circle cx="3783" cy="1381" r="7.5" fill="none" stroke="#ebebeb" stroke-width="5"/><path d="M3754 1459 H3744 V1500 H3785 V1459 H3775" fill="none" stroke="#ebebeb" stroke-width="3"/><rect x="3757" y="1455" width="15" height="8" fill="#ebebeb"/><path d="M3750 1466 H3779 V1485 L3770 1494 H3750 Z" fill="#ebebeb"/><rect x="3714.5" y="1550.5" width="105" height="97" rx="16" fill="#2f2f2f" stroke="#1c1c1c" stroke-width="3"/><rect x="3748" y="1587" width="36" height="3" fill="#111"/><path d="M3748 1590 H3784 L3766 1607 Z" fill="#ebebeb"/></svg>
<!-- PALETTE -->
<div class="a" style="left:0;top:1803px;width:3838px;height:107px;background:#343434"></div>
<div class="a" style="left:152px;top:1802px;width:1578px;height:1px;background:#dedede"></div>
<div class="a" style="left:0;top:1803px;width:3838px;height:4px;background:linear-gradient(#2e2e2e,#343434)"></div>
<svg style="left:0;top:0" width="3838" height="2012"><rect x="3" y="1808" width="98" height="100" fill="#fff"/><path d="M9 1816 L95 1901 M95 1816 L9 1901" stroke="#c8243c" stroke-width="7" stroke-linecap="round"/><rect x="104" y="1808" width="99" height="100" fill="#000"/><rect x="105.5" y="1810.5" width="96" height="96" fill="none" stroke="#141414" stroke-width="3"/><rect x="205" y="1808" width="100" height="100" fill="#808080"/><rect x="206.5" y="1810.5" width="97" height="96" fill="none" stroke="#8a8a8a" stroke-width="3"/><rect x="307" y="1808" width="100" height="100" fill="#fff"/><rect x="409.5" y="1808.8" width="57.5" height="48" fill="#1a1a1a"/><rect x="411.0" y="1810.3" width="54.5" height="45.0" fill="none" stroke="#2c2c2c" stroke-width="3"/><rect x="409.5" y="1859.8" width="57.5" height="48.2" fill="#d45500"/><rect x="411.0" y="1861.3" width="54.5" height="45.2" fill="none" stroke="#d76214" stroke-width="3"/><rect x="469.5" y="1808.8" width="57.5" height="48" fill="#333333"/><rect x="471.0" y="1810.3" width="54.5" height="45.0" fill="none" stroke="#434343" stroke-width="3"/><rect x="469.5" y="1859.8" width="57.5" height="48.2" fill="#ff6600"/><rect x="471.0" y="1861.3" width="54.5" height="45.2" fill="none" stroke="#ff7214" stroke-width="3"/><rect x="529.5" y="1808.8" width="57.5" height="48" fill="#4d4d4d"/><rect x="531.0" y="1810.3" width="54.5" height="45.0" fill="none" stroke="#5b5b5b" stroke-width="3"/><rect x="529.5" y="1859.8" width="57.5" height="48.2" fill="#ff7f2a"/><rect x="531.0" y="1861.3" width="54.5" height="45.2" fill="none" stroke="#ff893b" stroke-width="3"/><rect x="589.5" y="1808.8" width="57.5" height="48" fill="#666666"/><rect x="591.0" y="1810.3" width="54.5" height="45.0" fill="none" stroke="#727272" stroke-width="3"/><rect x="589.5" y="1859.8" width="57.5" height="48.2" fill="#ff9955"/><rect x="591.0" y="1861.3" width="54.5" height="45.2" fill="none" stroke="#ffa162" stroke-width="3"/><rect x="649.5" y="1808.8" width="57.5" height="48" fill="#999999"/><rect x="651.0" y="1810.3" width="54.5" height="45.0" fill="none" stroke="#a1a1a1" stroke-width="3"/><rect x="649.5" y="1859.8" width="57.5" height="48.2" fill="#ffb380"/><rect x="651.0" y="1861.3" width="54.5" height="45.2" fill="none" stroke="#ffb98a" stroke-width="3"/><rect x="709.5" y="1808.8" width="57.5" height="48" fill="#b3b3b3"/><rect x="711.0" y="1810.3" width="54.5" height="45.0" fill="none" stroke="#b9b9b9" stroke-width="3"/><rect x="709.5" y="1859.8" width="57.5" height="48.2" fill="#ffccaa"/><rect x="711.0" y="1861.3" width="54.5" height="45.2" fill="none" stroke="#f4c3a3" stroke-width="3"/><rect x="769.5" y="1808.8" width="57.5" height="48" fill="#cccccc"/><rect x="771.0" y="1810.3" width="54.5" height="45.0" fill="none" stroke="#d0d0d0" stroke-width="3"/><rect x="769.5" y="1859.8" width="57.5" height="48.2" fill="#ffe6d5"/><rect x="771.0" y="1861.3" width="54.5" height="45.2" fill="none" stroke="#f4dccc" stroke-width="3"/><rect x="829.5" y="1808.8" width="57.5" height="48" fill="#e6e6e6"/><rect x="831.0" y="1810.3" width="54.5" height="45.0" fill="none" stroke="#dcdcdc" stroke-width="3"/><rect x="829.5" y="1859.8" width="57.5" height="48.2" fill="#28170b"/><rect x="831.0" y="1861.3" width="54.5" height="45.2" fill="none" stroke="#39291e" stroke-width="3"/><rect x="889.5" y="1808.8" width="57.5" height="48" fill="#ececec"/><rect x="891.0" y="1810.3" width="54.5" height="45.0" fill="none" stroke="#e2e2e2" stroke-width="3"/><rect x="889.5" y="1859.8" width="57.5" height="48.2" fill="#502d16"/><rect x="891.0" y="1861.3" width="54.5" height="45.2" fill="none" stroke="#5e3d28" stroke-width="3"/><rect x="949.5" y="1808.8" width="57.5" height="48" fill="#f2f2f2"/><rect x="951.0" y="1810.3" width="54.5" height="45.0" fill="none" stroke="#e8e8e8" stroke-width="3"/><rect x="949.5" y="1859.8" width="57.5" height="48.2" fill="#784421"/><rect x="951.0" y="1861.3" width="54.5" height="45.2" fill="none" stroke="#825232" stroke-width="3"/><rect x="1009.5" y="1808.8" width="57.5" height="48" fill="#f9f9f9"/><rect x="1011.0" y="1810.3" width="54.5" height="45.0" fill="none" stroke="#efefef" stroke-width="3"/><rect x="1009.5" y="1859.8" width="57.5" height="48.2" fill="#a05a2c"/><rect x="1011.0" y="1861.3" width="54.5" height="45.2" fill="none" stroke="#a7673c" stroke-width="3"/><rect x="1069.5" y="1808.8" width="57.5" height="48" fill="#800000"/><rect x="1071.0" y="1810.3" width="54.5" height="45.0" fill="none" stroke="#8a1414" stroke-width="3"/><rect x="1069.5" y="1859.8" width="57.5" height="48.2" fill="#c87137"/><rect x="1071.0" y="1861.3" width="54.5" height="45.2" fill="none" stroke="#cc7c47" stroke-width="3"/><rect x="1129.5" y="1808.8" width="57.5" height="48" fill="#ff0000"/><rect x="1131.0" y="1810.3" width="54.5" height="45.0" fill="none" stroke="#ff1414" stroke-width="3"/><rect x="1129.5" y="1859.8" width="57.5" height="48.2" fill="#d38d5f"/><rect x="1131.0" y="1861.3" width="54.5" height="45.2" fill="none" stroke="#d6966b" stroke-width="3"/><rect x="1189.5" y="1808.8" width="57.5" height="48" fill="#808000"/><rect x="1191.0" y="1810.3" width="54.5" height="45.0" fill="none" stroke="#8a8a14" stroke-width="3"/><rect x="1189.5" y="1859.8" width="57.5" height="48.2" fill="#deaa87"/><rect x="1191.0" y="1861.3" width="54.5" height="45.2" fill="none" stroke="#e0b090" stroke-width="3"/><rect x="1249.5" y="1808.8" width="57.5" height="48" fill="#ffff00"/><rect x="1251.0" y="1810.3" width="54.5" height="45.0" fill="none" stroke="#f4f400" stroke-width="3"/><rect x="1249.5" y="1859.8" width="57.5" height="48.2" fill="#e9c6af"/><rect x="1251.0" y="1861.3" width="54.5" height="45.2" fill="none" stroke="#eacab5" stroke-width="3"/><rect x="1309.5" y="1808.8" width="57.5" height="48" fill="#008000"/><rect x="1311.0" y="1810.3" width="54.5" height="45.0" fill="none" stroke="#148a14" stroke-width="3"/><rect x="1309.5" y="1859.8" width="57.5" height="48.2" fill="#f4e3d7"/><rect x="1311.0" y="1861.3" width="54.5" height="45.2" fill="none" stroke="#ead9ce" stroke-width="3"/><rect x="1369.5" y="1808.8" width="57.5" height="48" fill="#00ff00"/><rect x="1371.0" y="1810.3" width="54.5" height="45.0" fill="none" stroke="#14ff14" stroke-width="3"/><rect x="1369.5" y="1859.8" width="57.5" height="48.2" fill="#241f1c"/><rect x="1371.0" y="1861.3" width="54.5" height="45.2" fill="none" stroke="#35302e" stroke-width="3"/><rect x="1429.5" y="1808.8" width="57.5" height="48" fill="#008080"/><rect x="1431.0" y="1810.3" width="54.5" height="45.0" fill="none" stroke="#148a8a" stroke-width="3"/><rect x="1429.5" y="1859.8" width="57.5" height="48.2" fill="#483e37"/><rect x="1431.0" y="1861.3" width="54.5" height="45.2" fill="none" stroke="#564d47" stroke-width="3"/><rect x="1489.5" y="1808.8" width="57.5" height="48" fill="#00ffff"/><rect x="1491.0" y="1810.3" width="54.5" height="45.0" fill="none" stroke="#14ffff" stroke-width="3"/><rect x="1489.5" y="1859.8" width="57.5" height="48.2" fill="#6c5d53"/><rect x="1491.0" y="1861.3" width="54.5" height="45.2" fill="none" stroke="#776960" stroke-width="3"/><rect x="1549.5" y="1808.8" width="57.5" height="48" fill="#000080"/><rect x="1551.0" y="1810.3" width="54.5" height="45.0" fill="none" stroke="#14148a" stroke-width="3"/><rect x="1549.5" y="1859.8" width="57.5" height="48.2" fill="#917c6f"/><rect x="1551.0" y="1861.3" width="54.5" height="45.2" fill="none" stroke="#99867a" stroke-width="3"/><rect x="1609.5" y="1808.8" width="57.5" height="48" fill="#0000ff"/><rect x="1611.0" y="1810.3" width="54.5" height="45.0" fill="none" stroke="#1414ff" stroke-width="3"/><rect x="1609.5" y="1859.8" width="57.5" height="48.2" fill="#ac9d93"/><rect x="1611.0" y="1861.3" width="54.5" height="45.2" fill="none" stroke="#b2a49b" stroke-width="3"/><rect x="1669.5" y="1808.8" width="57.5" height="48" fill="#800080"/><rect x="1671.0" y="1810.3" width="54.5" height="45.0" fill="none" stroke="#8a148a" stroke-width="3"/><rect x="1669.5" y="1859.8" width="57.5" height="48.2" fill="#c8beb7"/><rect x="1671.0" y="1861.3" width="54.5" height="45.2" fill="none" stroke="#ccc3bc" stroke-width="3"/><rect x="1729.5" y="1808.8" width="57.5" height="48" fill="#ff00ff"/><rect x="1731.0" y="1810.3" width="54.5" height="45.0" fill="none" stroke="#ff14ff" stroke-width="3"/><rect x="1729.5" y="1859.8" width="57.5" height="48.2" fill="#e3dedb"/><rect x="1731.0" y="1861.3" width="54.5" height="45.2" fill="none" stroke="#d9d5d2" stroke-width="3"/><rect x="1789.5" y="1808.8" width="57.5" height="48" fill="#2b0000"/><rect x="1791.0" y="1810.3" width="54.5" height="45.0" fill="none" stroke="#3b1414" stroke-width="3"/><rect x="1789.5" y="1859.8" width="57.5" height="48.2" fill="#2b2200"/><rect x="1791.0" y="1861.3" width="54.5" height="45.2" fill="none" stroke="#3b3314" stroke-width="3"/><rect x="1849.5" y="1808.8" width="57.5" height="48" fill="#550000"/><rect x="1851.0" y="1810.3" width="54.5" height="45.0" fill="none" stroke="#621414" stroke-width="3"/><rect x="1849.5" y="1859.8" width="57.5" height="48.2" fill="#554400"/><rect x="1851.0" y="1861.3" width="54.5" height="45.2" fill="none" stroke="#625214" stroke-width="3"/><rect x="1909.5" y="1808.8" width="57.5" height="48" fill="#800000"/><rect x="1911.0" y="1810.3" width="54.5" height="45.0" fill="none" stroke="#8a1414" stroke-width="3"/><rect x="1909.5" y="1859.8" width="57.5" height="48.2" fill="#806600"/><rect x="1911.0" y="1861.3" width="54.5" height="45.2" fill="none" stroke="#8a7214" stroke-width="3"/><rect x="1969.5" y="1808.8" width="57.5" height="48" fill="#aa0000"/><rect x="1971.0" y="1810.3" width="54.5" height="45.0" fill="none" stroke="#b01414" stroke-width="3"/><rect x="1969.5" y="1859.8" width="57.5" height="48.2" fill="#aa8800"/><rect x="1971.0" y="1861.3" width="54.5" height="45.2" fill="none" stroke="#b09114" stroke-width="3"/><rect x="2029.5" y="1808.8" width="57.5" height="48" fill="#d40000"/><rect x="2031.0" y="1810.3" width="54.5" height="45.0" fill="none" stroke="#d71414" stroke-width="3"/><rect x="2029.5" y="1859.8" width="57.5" height="48.2" fill="#d4aa00"/><rect x="2031.0" y="1861.3" width="54.5" height="45.2" fill="none" stroke="#d7b014" stroke-width="3"/><rect x="2089.5" y="1808.8" width="57.5" height="48" fill="#ff0000"/><rect x="2091.0" y="1810.3" width="54.5" height="45.0" fill="none" stroke="#ff1414" stroke-width="3"/><rect x="2089.5" y="1859.8" width="57.5" height="48.2" fill="#ffcc00"/><rect x="2091.0" y="1861.3" width="54.5" height="45.2" fill="none" stroke="#ffd014" stroke-width="3"/><rect x="2149.5" y="1808.8" width="57.5" height="48" fill="#ff2a2a"/><rect x="2151.0" y="1810.3" width="54.5" height="45.0" fill="none" stroke="#ff3b3b" stroke-width="3"/><rect x="2149.5" y="1859.8" width="57.5" height="48.2" fill="#ffd42a"/><rect x="2151.0" y="1861.3" width="54.5" height="45.2" fill="none" stroke="#ffd73b" stroke-width="3"/><rect x="2209.5" y="1808.8" width="57.5" height="48" fill="#ff5555"/><rect x="2211.0" y="1810.3" width="54.5" height="45.0" fill="none" stroke="#ff6262" stroke-width="3"/><rect x="2209.5" y="1859.8" width="57.5" height="48.2" fill="#ffdd55"/><rect x="2211.0" y="1861.3" width="54.5" height="45.2" fill="none" stroke="#f4d451" stroke-width="3"/><rect x="2269.5" y="1808.8" width="57.5" height="48" fill="#ff8080"/><rect x="2271.0" y="1810.3" width="54.5" height="45.0" fill="none" stroke="#ff8a8a" stroke-width="3"/><rect x="2269.5" y="1859.8" width="57.5" height="48.2" fill="#ffe680"/><rect x="2271.0" y="1861.3" width="54.5" height="45.2" fill="none" stroke="#f4dc7a" stroke-width="3"/><rect x="2329.5" y="1808.8" width="57.5" height="48" fill="#ffaaaa"/><rect x="2331.0" y="1810.3" width="54.5" height="45.0" fill="none" stroke="#ffb0b0" stroke-width="3"/><rect x="2329.5" y="1859.8" width="57.5" height="48.2" fill="#ffeeaa"/><rect x="2331.0" y="1861.3" width="54.5" height="45.2" fill="none" stroke="#f4e4a3" stroke-width="3"/><rect x="2389.5" y="1808.8" width="57.5" height="48" fill="#ffd5d5"/><rect x="2391.0" y="1810.3" width="54.5" height="45.0" fill="none" stroke="#f4cccc" stroke-width="3"/><rect x="2389.5" y="1859.8" width="57.5" height="48.2" fill="#fff6d5"/><rect x="2391.0" y="1861.3" width="54.5" height="45.2" fill="none" stroke="#f4eccc" stroke-width="3"/><rect x="2449.5" y="1808.8" width="57.5" height="48" fill="#280b0b"/><rect x="2451.0" y="1810.3" width="54.5" height="45.0" fill="none" stroke="#391e1e" stroke-width="3"/><rect x="2449.5" y="1859.8" width="57.5" height="48.2" fill="#28220b"/><rect x="2451.0" y="1861.3" width="54.5" height="45.2" fill="none" stroke="#39331e" stroke-width="3"/><rect x="2509.5" y="1808.8" width="57.5" height="48" fill="#501616"/><rect x="2511.0" y="1810.3" width="54.5" height="45.0" fill="none" stroke="#5e2828" stroke-width="3"/><rect x="2509.5" y="1859.8" width="57.5" height="48.2" fill="#504416"/><rect x="2511.0" y="1861.3" width="54.5" height="45.2" fill="none" stroke="#5e5228" stroke-width="3"/><rect x="2569.5" y="1808.8" width="57.5" height="48" fill="#782121"/><rect x="2571.0" y="1810.3" width="54.5" height="45.0" fill="none" stroke="#823232" stroke-width="3"/><rect x="2569.5" y="1859.8" width="57.5" height="48.2" fill="#786721"/><rect x="2571.0" y="1861.3" width="54.5" height="45.2" fill="none" stroke="#827332" stroke-width="3"/><rect x="2629.5" y="1808.8" width="57.5" height="48" fill="#a02c2c"/><rect x="2631.0" y="1810.3" width="54.5" height="45.0" fill="none" stroke="#a73c3c" stroke-width="3"/><rect x="2629.5" y="1859.8" width="57.5" height="48.2" fill="#a0892c"/><rect x="2631.0" y="1861.3" width="54.5" height="45.2" fill="none" stroke="#a7923c" stroke-width="3"/><rect x="2689.5" y="1808.8" width="57.5" height="48" fill="#c83737"/><rect x="2691.0" y="1810.3" width="54.5" height="45.0" fill="none" stroke="#cc4747" stroke-width="3"/><rect x="2689.5" y="1859.8" width="57.5" height="48.2" fill="#c8ab37"/><rect x="2691.0" y="1861.3" width="54.5" height="45.2" fill="none" stroke="#ccb147" stroke-width="3"/><rect x="2749.5" y="1808.8" width="57.5" height="48" fill="#d35f5f"/><rect x="2751.0" y="1810.3" width="54.5" height="45.0" fill="none" stroke="#d66b6b" stroke-width="3"/><rect x="2749.5" y="1859.8" width="57.5" height="48.2" fill="#d3bc5f"/><rect x="2751.0" y="1861.3" width="54.5" height="45.2" fill="none" stroke="#d6c16b" stroke-width="3"/><rect x="2809.5" y="1808.8" width="57.5" height="48" fill="#de8787"/><rect x="2811.0" y="1810.3" width="54.5" height="45.0" fill="none" stroke="#e09090" stroke-width="3"/><rect x="2809.5" y="1859.8" width="57.5" height="48.2" fill="#decd87"/><rect x="2811.0" y="1861.3" width="54.5" height="45.2" fill="none" stroke="#e0d190" stroke-width="3"/><rect x="2869.5" y="1808.8" width="57.5" height="48" fill="#e9afaf"/><rect x="2871.0" y="1810.3" width="54.5" height="45.0" fill="none" stroke="#eab5b5" stroke-width="3"/><rect x="2869.5" y="1859.8" width="57.5" height="48.2" fill="#e9ddaf"/><rect x="2871.0" y="1861.3" width="54.5" height="45.2" fill="none" stroke="#dfd4a8" stroke-width="3"/><rect x="2929.5" y="1808.8" width="57.5" height="48" fill="#f4d7d7"/><rect x="2931.0" y="1810.3" width="54.5" height="45.0" fill="none" stroke="#eacece" stroke-width="3"/><rect x="2929.5" y="1859.8" width="57.5" height="48.2" fill="#f4eed7"/><rect x="2931.0" y="1861.3" width="54.5" height="45.2" fill="none" stroke="#eae4ce" stroke-width="3"/><rect x="2989.5" y="1808.8" width="57.5" height="48" fill="#241c1c"/><rect x="2991.0" y="1810.3" width="54.5" height="45.0" fill="none" stroke="#352e2e" stroke-width="3"/><rect x="2989.5" y="1859.8" width="57.5" height="48.2" fill="#24221c"/><rect x="2991.0" y="1861.3" width="54.5" height="45.2" fill="none" stroke="#35332e" stroke-width="3"/><rect x="3049.5" y="1808.8" width="57.5" height="48" fill="#483737"/><rect x="3051.0" y="1810.3" width="54.5" height="45.0" fill="none" stroke="#564747" stroke-width="3"/><rect x="3049.5" y="1859.8" width="57.5" height="48.2" fill="#484537"/><rect x="3051.0" y="1861.3" width="54.5" height="45.2" fill="none" stroke="#565347" stroke-width="3"/><rect x="3109.5" y="1808.8" width="57.5" height="48" fill="#6c5353"/><rect x="3111.0" y="1810.3" width="54.5" height="45.0" fill="none" stroke="#776060" stroke-width="3"/><rect x="3109.5" y="1859.8" width="57.5" height="48.2" fill="#6c6753"/><rect x="3111.0" y="1861.3" width="54.5" height="45.2" fill="none" stroke="#777360" stroke-width="3"/><rect x="3169.5" y="1808.8" width="57.5" height="48" fill="#916f6f"/><rect x="3171.0" y="1810.3" width="54.5" height="45.0" fill="none" stroke="#997a7a" stroke-width="3"/><rect x="3169.5" y="1859.8" width="57.5" height="48.2" fill="#918a6f"/><rect x="3171.0" y="1861.3" width="54.5" height="45.2" fill="none" stroke="#99937a" stroke-width="3"/><rect x="3229.5" y="1808.8" width="57.5" height="48" fill="#ac9393"/><rect x="3231.0" y="1810.3" width="54.5" height="45.0" fill="none" stroke="#b29b9b" stroke-width="3"/><rect x="3229.5" y="1859.8" width="57.5" height="48.2" fill="#aca793"/><rect x="3231.0" y="1861.3" width="54.5" height="45.2" fill="none" stroke="#b2ae9b" stroke-width="3"/><rect x="3289.5" y="1808.8" width="57.5" height="48" fill="#c8b7b7"/><rect x="3291.0" y="1810.3" width="54.5" height="45.0" fill="none" stroke="#ccbcbc" stroke-width="3"/><rect x="3289.5" y="1859.8" width="57.5" height="48.2" fill="#c8c4b7"/><rect x="3291.0" y="1861.3" width="54.5" height="45.2" fill="none" stroke="#ccc8bc" stroke-width="3"/><rect x="3349.5" y="1808.8" width="57.5" height="48" fill="#e3dbdb"/><rect x="3351.0" y="1810.3" width="54.5" height="45.0" fill="none" stroke="#d9d2d2" stroke-width="3"/><rect x="3349.5" y="1859.8" width="57.5" height="48.2" fill="#e3e2db"/><rect x="3351.0" y="1861.3" width="54.5" height="45.2" fill="none" stroke="#d9d8d2" stroke-width="3"/><rect x="3409.5" y="1808.8" width="57.5" height="48" fill="#2b1100"/><rect x="3411.0" y="1810.3" width="54.5" height="45.0" fill="none" stroke="#3b2414" stroke-width="3"/><rect x="3409.5" y="1859.8" width="57.5" height="48.2" fill="#222b00"/><rect x="3411.0" y="1861.3" width="54.5" height="45.2" fill="none" stroke="#333b14" stroke-width="3"/><rect x="3470.0" y="1808.8" width="54" height="48" fill="#552200"/><rect x="3471.5" y="1810.3" width="51" height="45.0" fill="none" stroke="#623314" stroke-width="3"/><rect x="3470.0" y="1859.8" width="54" height="48.2" fill="#445500"/><rect x="3471.5" y="1861.3" width="51" height="45.2" fill="none" stroke="#526214" stroke-width="3"/><rect x="3527.0" y="1808.8" width="54" height="48" fill="#803300"/><rect x="3528.5" y="1810.3" width="51" height="45.0" fill="none" stroke="#8a4314" stroke-width="3"/><rect x="3527.0" y="1859.8" width="54" height="48.2" fill="#668000"/><rect x="3528.5" y="1861.3" width="51" height="45.2" fill="none" stroke="#728a14" stroke-width="3"/><rect x="3584.0" y="1808.8" width="54" height="48" fill="#aa4400"/><rect x="3585.5" y="1810.3" width="51" height="45.0" fill="none" stroke="#b05214" stroke-width="3"/><rect x="3584.0" y="1859.8" width="54" height="48.2" fill="#88aa00"/><rect x="3585.5" y="1861.3" width="51" height="45.2" fill="none" stroke="#91b014" stroke-width="3"/><path d="M3653 1867 L3671 1849 L3689 1867" fill="none" stroke="#808080" stroke-width="6"/><path d="M3722 1848 L3740 1865 L3758 1848" fill="none" stroke="#ebebeb" stroke-width="6"/><rect x="3785" y="1851" width="42" height="6" fill="#ebebeb"/><rect x="3785" y="1866" width="42" height="6" fill="#ebebeb"/><rect x="3785" y="1881" width="42" height="6" fill="#ebebeb"/></svg>
<!-- STATUS BAR -->
<div class="a" style="left:0;top:1910px;width:3838px;height:102px;background:#343434"></div>
<div class="t" style="left:0;top:1924px;width:105px;text-align:right;font-size:34px;color:#f0f0f0">Fill:</div>
<div class="t" style="left:-6px;top:1974px;width:111px;text-align:right;font-size:33px;color:#f0f0f0">Stroke:</div>
<div class="t" style="left:210px;top:1923px;font-size:35px;color:#f0f0f0">N/A</div>
<div class="t" style="left:210px;top:1973px;font-size:35px;color:#f0f0f0">N/A</div>
<div class="t" style="left:467px;top:1946px;font-size:35px;color:#f0f0f0">O:</div>
<div class="a" style="left:521px;top:1914px;width:215px;height:110px;background:#303030;border:3px solid #1c1c1c;border-radius:16px"></div>
<div class="a" style="left:633px;top:1917px;width:2px;height:100px;background:#292929"></div><div class="a" style="left:684px;top:1917px;width:2px;height:100px;background:#292929"></div>
<div class="t" style="left:543px;top:1947px;font-size:35px;color:#979797;letter-spacing:-1px">100</div>
<div class="a" style="left:641px;top:1962px;width:36px;height:5px;background:#555"></div><div class="a" style="left:692px;top:1962px;width:36px;height:5px;background:#555"></div><div class="a" style="left:707.5px;top:1946px;width:5px;height:36px;background:#555"></div>
<div class="a" style="left:782px;top:1938px;width:9px;height:51px;background:#fff"></div>
<div class="t" style="left:809px;top:1947px;font-size:35px;font-style:italic;color:#f0f0f0">[root]</div>
<svg style="left:940px;top:1930px" width="70" height="70"><g transform="translate(-940,-1930)"><path d="M958 1967 Q977 1943 996 1967 Q977 1991 958 1967 Z" fill="none" stroke="#7a7a7a" stroke-width="6" stroke-linejoin="round"/><circle cx="977" cy="1967" r="5.5" fill="#7a7a7a"/><path d="M977 1955 V1944 M966 1958 L960 1951 M988 1958 L994 1951" stroke="#7a7a7a" stroke-width="5" stroke-linecap="round"/></g></svg>
<svg style="left:1065px;top:1938px" width="60" height="60"><rect x="6" y="25" width="24" height="22" rx="2" fill="#7a7a7a"/><path d="M22 26 V17 A8 8 0 0 1 38 17 V23" fill="none" stroke="#7a7a7a" stroke-width="5"/></svg>
<div class="a" style="left:1142px;top:1933px;width:2px;height:62px;background:#2a2a2a"></div>
<div class="t" style="left:1164px;top:1924px;font-size:35.8px;color:#f0f0f0">No objects selected. Click, Shift+click, Alt+scroll mouse on top of objects, or drag around</div>
<div class="t" style="left:1164px;top:1974px;font-size:35.8px;color:#f0f0f0">objects to select.</div>
<svg style="left:2700px;top:1935px" width="300" height="70"><path d="M33 18 V44 L17 31 Z" fill="#8a8a8a"/><path d="M230 18 V44 L246 31 Z" fill="#8a8a8a"/></svg>
<div class="a" style="left:2778px;top:1915px;width:106px;height:110px;background:#303030;border:3px solid #1c1c1c;border-radius:16px"></div>
<svg style="left:2800px;top:1950px" width="60" height="30"><path d="M13 4 H47 L30 20 Z" fill="#8a8a8a"/></svg>
<div class="a" style="left:2993px;top:1933px;width:2px;height:62px;background:#2a2a2a"></div>
<div class="t" style="left:3014px;top:1922px;font-size:35px;color:#f0f0f0">X:</div><div class="t" style="left:3014px;top:1973px;font-size:35px;color:#f0f0f0">Y:</div>
<div class="t" style="left:3073px;top:1922px;width:100px;text-align:right;font-size:35px;color:#f0f0f0;letter-spacing:-1.2px">21.37</div><div class="t" style="left:3073px;top:1973px;width:100px;text-align:right;font-size:35px;color:#f0f0f0;letter-spacing:-1.2px">14.48</div>
<div class="t" style="left:3209px;top:1948px;font-size:35px;color:#f0f0f0">Z:</div>
<div class="a" style="left:3251px;top:1915px;width:233px;height:110px;background:#303030;border:3px solid #1c1c1c;border-radius:16px"></div>
<div class="a" style="left:3381px;top:1918px;width:2px;height:100px;background:#292929"></div><div class="a" style="left:3433px;top:1918px;width:2px;height:100px;background:#292929"></div>
<div class="t" style="left:3282px;top:1948px;font-size:35px;color:#f0f0f0;letter-spacing:-2px">152%</div>
<div class="a" style="left:3389px;top:1963px;width:36px;height:5px;background:#ebebeb"></div><div class="a" style="left:3441px;top:1963px;width:36px;height:5px;background:#ebebeb"></div><div class="a" style="left:3456.5px;top:1947px;width:5px;height:37px;background:#ebebeb"></div>
<div class="t" style="left:3515px;top:1948px;font-size:35px;color:#f0f0f0">R:</div>
<div class="a" style="left:3558px;top:1915px;width:251px;height:110px;background:#303030;border:3px solid #1c1c1c;border-radius:16px"></div>
<div class="a" style="left:3704px;top:1918px;width:2px;height:100px;background:#292929"></div><div class="a" style="left:3756px;top:1918px;width:2px;height:100px;background:#292929"></div>
<div class="t" style="left:3604px;top:1948px;font-size:35px;color:#f0f0f0;letter-spacing:-1.5px">0.00°</div>
<div class="a" style="left:3713px;top:1963px;width:36px;height:5px;background:#ebebeb"></div><div class="a" style="left:3764px;top:1963px;width:36px;height:5px;background:#ebebeb"></div><div class="a" style="left:3779.5px;top:1947px;width:5px;height:37px;background:#ebebeb"></div>
</body></html>
